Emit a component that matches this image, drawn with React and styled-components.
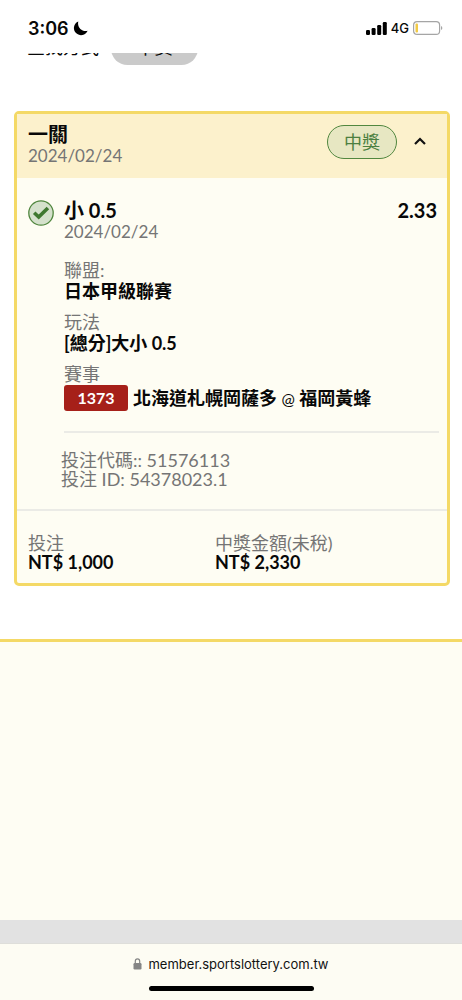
import React, {useState} from 'react'
import styled, {createGlobalStyle} from 'styled-components'

const GlobalStyle = createGlobalStyle`
  * {
    box-sizing: border-box;
  }
  body {
    margin: 0;
    background: #fff;
    color: #080808;
    font-family: Lato, 'Noto Sans CJK TC', sans-serif;
    font-size: 18px;
    line-height: 21px;
  }
  button {
    font: inherit;
    color: inherit;
  }
`

const Page = styled.div`
  min-height: 100vh;
  display: flex;
  flex-direction: column;
`
const StatusBar = styled.header`
  height: 53px;
  padding: 3px 19px 0 28px;
  display: flex;
  align-items: center;
  justify-content: space-between;
  font-family: Inter, sans-serif;
`
const StatusGroup = styled.div`
  display: flex;
  align-items: center;
  gap: 4px;
`
const Clock = styled.span`
  font-size: 18px;
  font-weight: 600;
`
const Network = styled.span`
  font-size: 13px;
  font-weight: 500;
`
// only the bottom edge of the filter row shows under the status bar
const FilterStrip = styled.div`
  height: 12px;
  padding-left: 27px;
  overflow: hidden;
  display: flex;
  align-items: flex-end;
  gap: 12px;
`
const FilterLabel = styled.span`
  width: 72px;
  padding-bottom: 7px;
  white-space: nowrap;
`
const FilterPill = styled.button`
  width: 87px;
  height: 33px;
  padding: 0 0 3px;
  flex-shrink: 0;
  border: 0;
  border-radius: 17px;
  background: #cacaca;
`
const Card = styled.article`
  margin: 46px 12px 53px 14px;
  border: 3px solid #f4d966;
  border-radius: 5px;
  background: #fefdf3;
`
const CardHeader = styled.div`
  height: 64px;
  padding: 0 15px 4px 11px;
  display: flex;
  align-items: center;
  background: #fcf1cc;
`
const HeaderText = styled.div`
  flex: 1;
  padding-top: 2px;
`
const Title = styled.h2`
  margin: 0;
  font-size: 20px;
  line-height: 21px;
  font-weight: 700;
`
const Muted = styled.div`
  color: #757575;
  font-weight: 400;
`
const DateText = styled.time`
  display: block;
  color: #757575;
  font-size: 17px;
`
const Value = styled.div`
  font-weight: 700;
`
const ResultPill = styled.span`
  width: 70px;
  height: 34px;
  margin-bottom: 4px;
  display: flex;
  align-items: center;
  justify-content: center;
  border: 1px solid #51873f;
  border-radius: 17px;
  background: #e7e7c2;
  color: #4c8040;
`
const Toggle = styled.button`
  width: 24px;
  height: 24px;
  margin: 0 0 6px 11px;
  padding: 0;
  display: flex;
  align-items: center;
  justify-content: center;
  border: 0;
  background: none;
`
const Selection = styled.div`
  padding: 22px 8px 20px 11px;
  display: grid;
  grid-template-columns: 26px 1fr;
  column-gap: 10px;
`
const Details = styled.div`
  display: flex;
  flex-direction: column;
`
const TitleRow = styled.div`
  padding-right: 2px;
  display: flex;
  justify-content: space-between;
`
const Fields = styled.div`
  padding: 18px 0 20px;
  display: flex;
  flex-direction: column;
  gap: 10px;
  border-bottom: 2px solid #ebebe6;
`
const Match = styled(Value)`
  display: flex;
  align-items: center;
  gap: 5px;
  line-height: 26px;
`
const MatchCode = styled.span`
  width: 64px;
  border-radius: 3px;
  background: #a62019;
  color: #fff;
  font-size: 16px;
  text-align: center;
`
const At = styled.span`
  font-size: 16px;
  font-weight: 400;
  line-height: 16px;
`
const BetIds = styled.div`
  padding-top: 18px;
  margin-left: -3px;
  line-height: 19px;
`
const Totals = styled.div`
  padding: 23px 11px 11px;
  display: grid;
  grid-template-columns: 187px 1fr;
  border-top: 2px solid #ebebe6;
  line-height: 19px;
`
const EmptyPanel = styled.section`
  flex: 1;
  border-top: 3px solid #f4d966;
  background: #fefdf3;
`
const PageFooter = styled.div`
  height: 23px;
  background: #e2e2e2;
`
const BrowserBar = styled.footer`
  height: 57px;
  padding: 11px 0 9px;
  display: flex;
  flex-direction: column;
  align-items: center;
  justify-content: space-between;
  border-top: 1px solid #dededa;
  background: #fdfcf3;
`
const Address = styled.a`
  display: flex;
  align-items: center;
  gap: 6px;
  color: #111;
  font-family: Inter, sans-serif;
  font-size: 13px;
  line-height: 18px;
  text-decoration: none;
`
const HomeIndicator = styled.div`
  width: 165px;
  height: 5px;
  border-radius: 3px;
  background: #000;
`

const MoonIcon = () => (
  <svg width="15" height="15" viewBox="0 0 15 15" aria-hidden="true">
    <path
      d="M5.300.5A7.100 7.100 0 1 0 14.600 9.700C9.500 11.300 3.800 6.500 5.300.5Z"
      fill="#000"
    />
  </svg>
)

const SignalIcon = () => (
  <svg width="21" height="13" viewBox="0 0 21 13" aria-hidden="true">
    <rect x="0" y="8" width="4" height="5" rx="1.200" />
    <rect x="5.600" y="6" width="4" height="7" rx="1.200" />
    <rect x="11.200" y="3" width="4" height="10" rx="1.200" />
    <rect x="16.800" y="0" width="4" height="13" rx="1.200" />
  </svg>
)

const BatteryIcon = () => (
  <svg width="30" height="14" viewBox="0 0 30 14" aria-hidden="true">
    <rect
      x=".6"
      y=".6"
      width="26"
      height="12.800"
      rx="3.500"
      fill="#fff"
      stroke="#a5a5a5"
      strokeWidth="1.200"
    />
    <rect x="2.500" y="2.500" width="2.500" height="9" rx="1" fill="#f2ca45" />
    <path d="M28 5v4c1.800-.7 1.800-3.300 0-4Z" fill="#a5a5a5" />
  </svg>
)

const CheckIcon = () => (
  <svg width="26" height="26" viewBox="0 0 26 26" role="img" aria-label="中獎">
    <circle
      cx="13"
      cy="13"
      r="12.200"
      fill="#d5e1cc"
      stroke="#51873f"
      strokeWidth="1.300"
    />
    <path
      d="m6.200 12.800 4.500 4.300 9.200-9.200"
      fill="none"
      stroke="#3f7830"
      strokeWidth="3.600"
    />
  </svg>
)

const ChevronIcon = ({open}) => (
  <svg width="12" height="8" viewBox="0 0 12 8" aria-hidden="true">
    <path
      d={open ? 'm1 7 5-5 5 5' : 'm1 1 5 5 5-5'}
      fill="none"
      stroke="#111"
      strokeWidth="2.200"
    />
  </svg>
)

const LockIcon = () => (
  <svg width="9" height="12" viewBox="0 0 9 12" aria-hidden="true">
    <rect x=".5" y="5" width="8" height="6.500" rx="1.200" fill="#858585" />
    <path
      d="M2.300 5.500V3.300a2.200 2.400 0 0 1 4.400 0v2.200"
      fill="none"
      stroke="#858585"
      strokeWidth="1.200"
    />
  </svg>
)

const Field = ({label, children}) => (
  <div>
    <Muted>{label}</Muted>
    {children}
  </div>
)

const BetCard = () => {
  const [open, setOpen] = useState(true)

  return (
    <Card>
      <CardHeader>
        <HeaderText>
          <Title>一關</Title>
          <DateText>2024/02/24</DateText>
        </HeaderText>
        <ResultPill>中獎</ResultPill>
        <Toggle
          type="button"
          aria-label="一關"
          aria-expanded={open}
          onClick={() => setOpen(!open)}
        >
          <ChevronIcon open={open} />
        </Toggle>
      </CardHeader>
      {open && (
        <Selection>
          <CheckIcon />
          <Details>
            <TitleRow>
              <Title as="h3">小 0.5</Title>
              <Title as="span">2.33</Title>
            </TitleRow>
            <DateText>2024/02/24</DateText>
            <Fields>
              <Field label="聯盟:">
                <Value>日本甲級聯賽</Value>
              </Field>
              <Field label="玩法">
                <Value>[總分]大小 0.5</Value>
              </Field>
              <Field label="賽事">
                <Match>
                  <MatchCode>1373</MatchCode>
                  <span>
                    北海道札幌岡薩多 <At>@</At> 福岡黃蜂
                  </span>
                </Match>
              </Field>
            </Fields>
            <BetIds>
              <Muted>投注代碼:: 51576113</Muted>
              <Muted>投注 ID: 54378023.1</Muted>
            </BetIds>
          </Details>
        </Selection>
      )}
      <Totals>
        <Field label="投注">
          <Value>NT$ 1,000</Value>
        </Field>
        <Field label="中獎金額(未稅)">
          <Value>NT$ 2,330</Value>
        </Field>
      </Totals>
    </Card>
  )
}

const App = () => (
  <Page>
    <GlobalStyle />
    <StatusBar>
      <StatusGroup>
        <Clock>3:06</Clock>
        <MoonIcon />
      </StatusGroup>
      <StatusGroup>
        <SignalIcon />
        <Network>4G</Network>
        <BatteryIcon />
      </StatusGroup>
    </StatusBar>
    <FilterStrip>
      <FilterLabel>查找方式</FilterLabel>
      <FilterPill type="button">中獎</FilterPill>
    </FilterStrip>
    <BetCard />
    <EmptyPanel />
    <PageFooter />
    <BrowserBar>
      <Address href="https://member.sportslottery.com.tw">
        <LockIcon />
        member.sportslottery.com.tw
      </Address>
      <HomeIndicator />
    </BrowserBar>
  </Page>
)

export default App
